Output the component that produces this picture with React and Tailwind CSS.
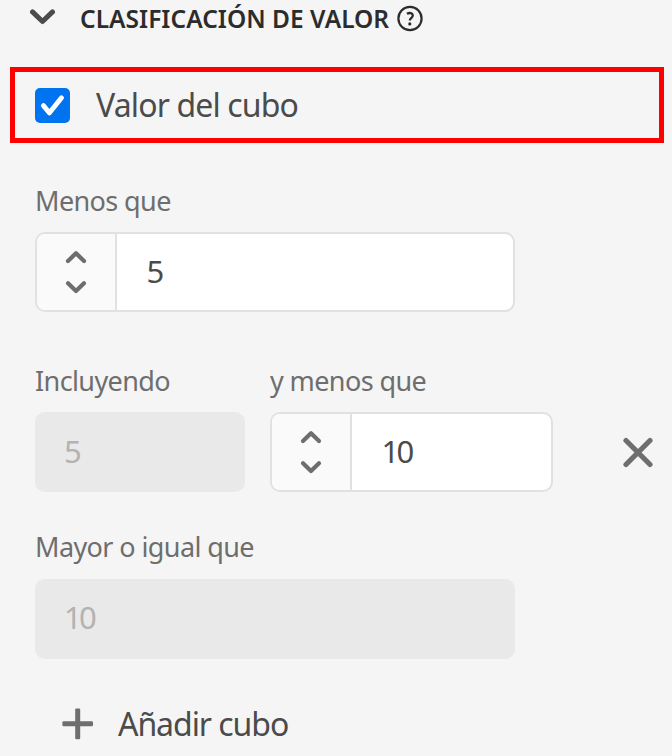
function Chevron({ up = false }) {
  return (
    <svg className="block" width="22" height="14" viewBox="0 0 22 14" fill="none" stroke="#6e6e6e" strokeWidth="4.2" strokeLinecap="round" strokeLinejoin="round">
      <path d={up ? "M3 11 11 3.2l8 7.8" : "M3 3.2 11 11l8-7.8"} />
    </svg>
  );
}

function Stepper({ value, width }) {
  return (
    <div className={`flex h-20 overflow-hidden rounded-[10px] border-2 border-[#e1e1e1] bg-white ${width}`}>
      <div className="flex w-20 shrink-0 flex-col items-center justify-center gap-4 border-r-2 border-[#e1e1e1] bg-[#fafafa]">
        <Chevron up />
        <Chevron />
      </div>
      <span className="pl-[29.5px] text-[31px] leading-[75px] tracking-[-2.8px] text-[#4b4b4b]">{value}</span>
    </div>
  );
}

function DisabledField({ value, width }) {
  return (
    <div className={`h-20 rounded-[10px] bg-[#e9e9e9] pl-[29px] text-[31px] tracking-[-2.8px] text-[#b3b3b3] ${width}`}>
      {value}
    </div>
  );
}

function Label({ children }) {
  return <div className="h-[41px] whitespace-nowrap text-[27px] leading-[41px] tracking-[-0.6px] text-[#6e6e6e]">{children}</div>;
}

export default function App() {
  return (
    <main className="h-[756px] w-[672px] overflow-hidden bg-[#f5f5f5] font-['Noto_Sans',sans-serif]">
      <header className="flex h-[37px] items-center">
        <svg className="ml-7 shrink-0" width="29" height="20" viewBox="0 0 29 20" fill="none" stroke="#4b4b4b" strokeWidth="5" strokeLinecap="round" strokeLinejoin="round">
          <path d="m4.5 2.9 10 9.6 10-9.6" />
        </svg>
        <h1 className="ml-[23px] w-[315px] whitespace-nowrap text-[24.5px] font-semibold leading-[37px] tracking-[0.03px] text-[#2c2c2c]">CLASIFICACIÓN DE VALOR</h1>
        <svg className="shrink-0" width="28" height="28" viewBox="0 0 28 28" fill="none" stroke="#2c2c2c" strokeWidth="2.2">
          <circle cx="15" cy="13.5" r="11.6" />
          <path d="M11.9 8.8c2.9-1.5 5.9-.8 5.9 1.7 0 2.3-3 2.3-3 5.1" strokeWidth="2.3" />
          <circle cx="14.8" cy="18.9" r="1.6" fill="#2c2c2c" stroke="none" />
        </svg>
      </header>

      <div className="ml-[10px] mt-[30px] flex h-[76px] w-[654px] items-center border-[5px] border-[#ff0000] pl-5">
        <span className="flex size-[35px] items-center justify-center rounded-[5px] bg-[#0073f0]">
          <svg width="35" height="35" viewBox="0 0 35 35" fill="none" stroke="#fff" strokeWidth="4.9" strokeLinecap="round" strokeLinejoin="round">
            <path d="m8.4 17.6 6.1 7.2 12-15" />
          </svg>
        </span>
        <span className="ml-[26px] whitespace-nowrap text-[32px] leading-[66px] tracking-[-0.87px] text-[#4b4b4b]">Valor del cubo</span>
      </div>

      <section className="pl-[35px]">
        <div className="mt-[37px] flex flex-col gap-[11px]">
          <Label>Menos que</Label>
          <Stepper value="5" width="w-[480px]" />
        </div>

        <div className="mt-12 flex items-end">
          <div className="flex w-[235px] flex-col gap-[11px]">
            <Label>Incluyendo</Label>
            <DisabledField value="5" width="w-[210px] leading-[79px]" />
          </div>
          <div className="flex w-[283px] flex-col gap-[11px]">
            <Label>y menos que</Label>
            <Stepper value="10" width="w-[283px]" />
          </div>
          <div className="ml-[69px] flex h-20 items-center">
            <svg width="32" height="32" viewBox="0 0 32 32" fill="none" stroke="#6e6e6e" strokeWidth="5.2" strokeLinecap="round">
              <path d="m4 4.5 24 24M28 4.5l-24 24" />
            </svg>
          </div>
        </div>

        <div className="mt-[34px] flex flex-col gap-3">
          <Label>Mayor o igual que</Label>
          <DisabledField value="10" width="w-[480px] leading-[77px]" />
        </div>

        <div className="mt-11 flex h-[41px] items-center">
          <svg className="ml-[27px]" width="32" height="32" viewBox="0 0 32 32" fill="#6e6e6e">
            <rect x="0.4" y="13.3" width="30.6" height="5" rx="1.2" />
            <rect x="13.2" y="0.4" width="5" height="30.8" rx="1.2" />
          </svg>
          <span className="ml-6 whitespace-nowrap text-[32px] leading-[41px] tracking-[-1.05px] text-[#4b4b4b]">Añadir cubo</span>
        </div>
      </section>
    </main>
  );
}
